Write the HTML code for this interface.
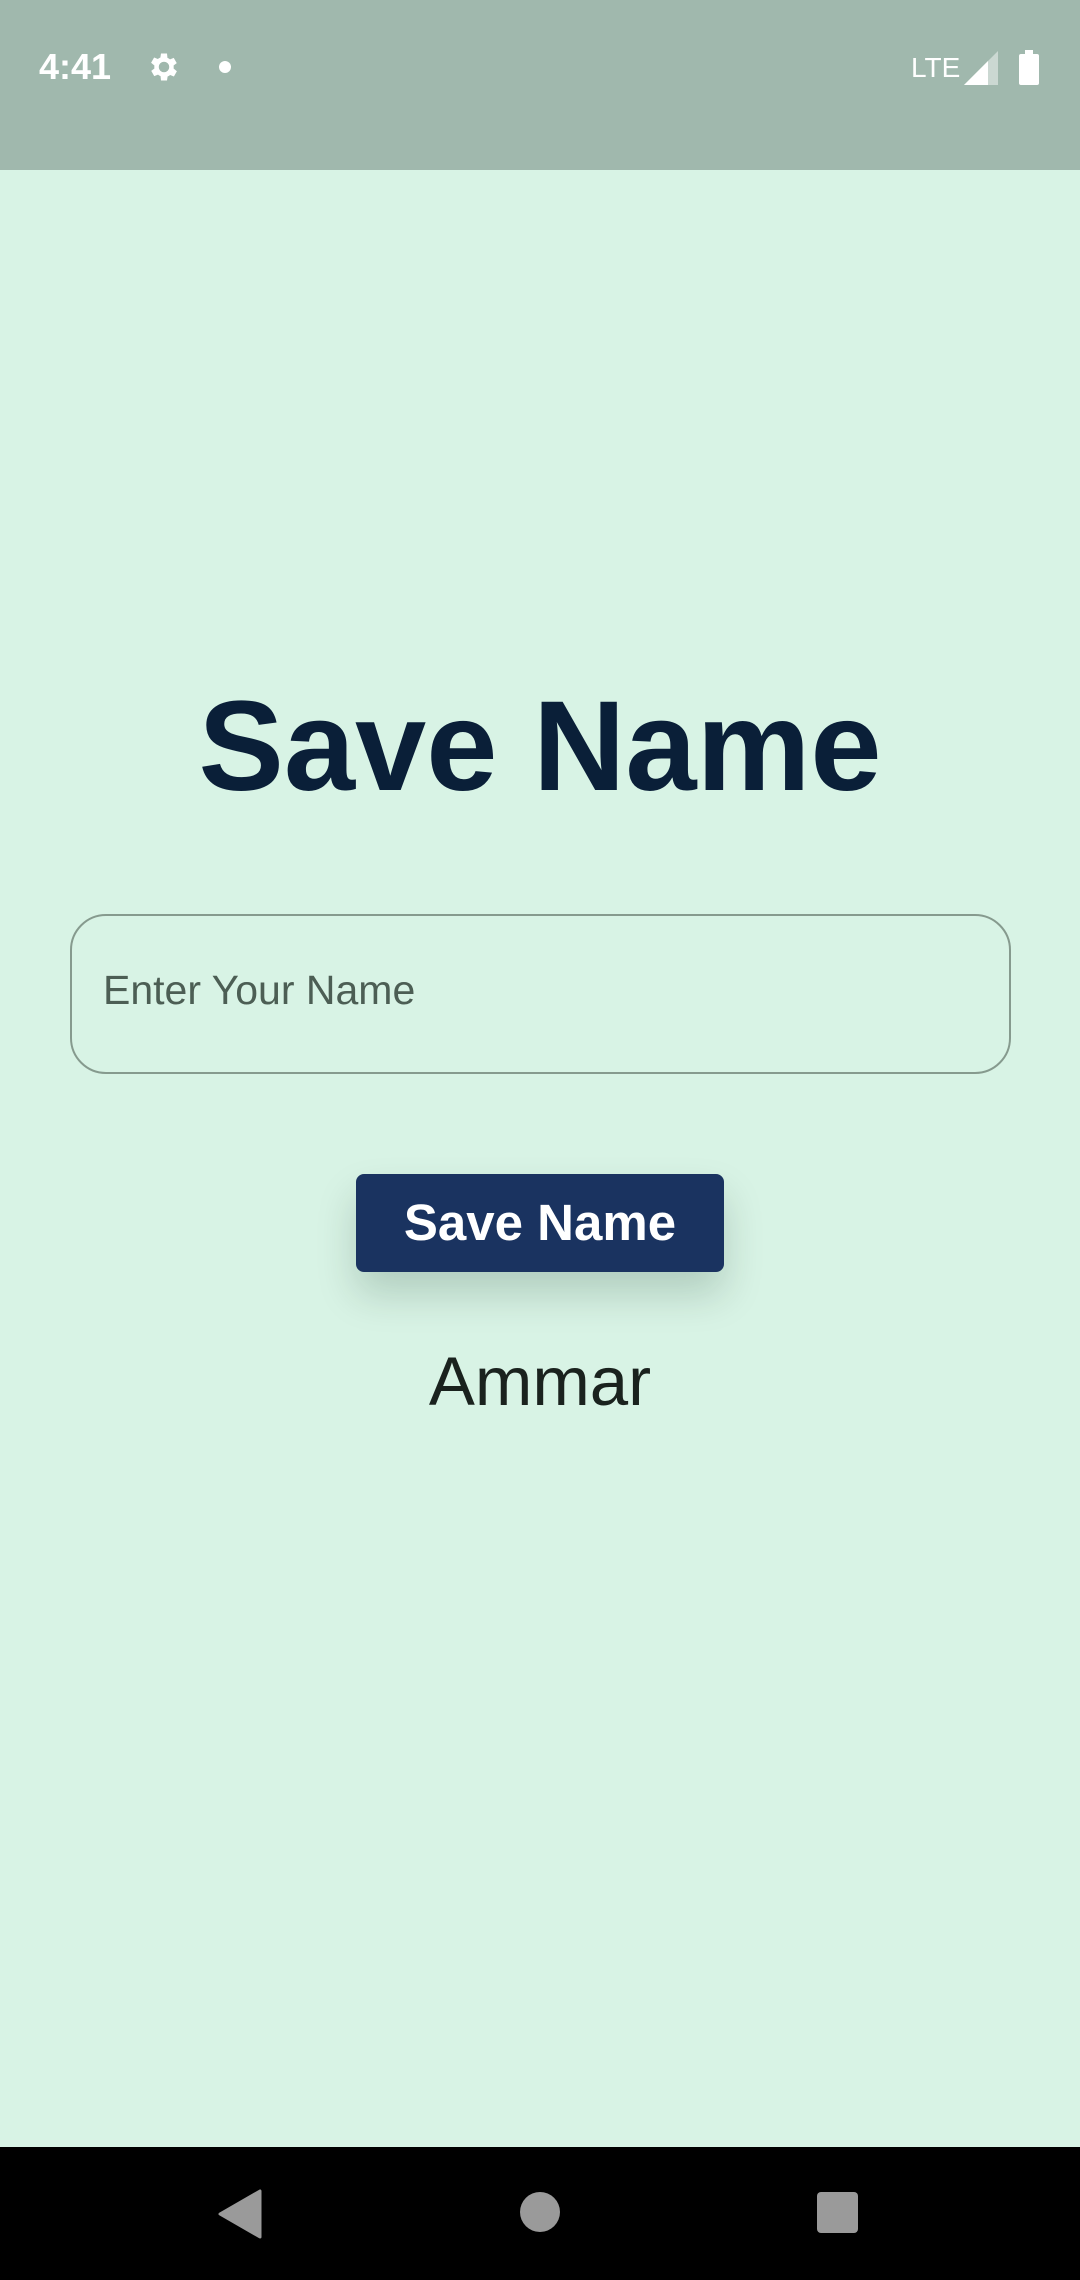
<!DOCTYPE html>
<html><head><meta charset="utf-8"><style>
html,body{margin:0;padding:0}
body{width:1080px;height:2280px;background:#d8f3e5;position:relative;overflow:hidden;font-family:"Liberation Sans",sans-serif}
.status{position:absolute;left:0;top:0;width:1080px;height:170px;background:#a0b8ad}
.t{position:absolute;color:#fff}
.title{position:absolute;top:662px;left:0;width:1080px;text-align:center;font-weight:bold;font-size:128px;color:#0a1f38;line-height:170px}
.input{position:absolute;left:70px;top:914px;width:941px;height:160px;border:2px solid #869a8e;border-radius:36px;box-sizing:border-box}
.ph{position:absolute;left:103px;top:962px;font-size:41px;color:#4c5e54;line-height:56px}
.btn{position:absolute;left:356px;top:1174px;width:368px;height:98px;background:#1a3360;border-radius:8px;color:#fff;font-weight:bold;font-size:51px;text-align:center;line-height:98px;box-shadow:0 22px 40px rgba(0,40,20,0.18)}
.name{position:absolute;left:0;width:1080px;top:1342px;text-align:center;font-size:69px;color:#1a221e;line-height:80px}
.nav{position:absolute;left:0;top:2147px;width:1080px;height:133px;background:#000}
</style></head><body>
<div class="status">
<div class="t" style="left:39px;top:47px;font-size:36px;line-height:40px;font-weight:bold">4:41</div>
<svg style="position:absolute;left:146px;top:49px" width="36" height="36" viewBox="0 0 24 24"><path fill="#fff" d="M19.4 13a7.5 7.5 0 0 0 0-2l2.1-1.6-2-3.5-2.5 1a7 7 0 0 0-1.7-1L15 3h-4l-.4 2.7a7 7 0 0 0-1.7 1l-2.5-1-2 3.5L6.6 11a7.5 7.5 0 0 0 0 2l-2.1 1.6 2 3.5 2.5-1a7 7 0 0 0 1.7 1L11 21h4l.4-2.7a7 7 0 0 0 1.7-1l2.5 1 2-3.5zM13 15.5a3.5 3.5 0 1 1 0-7 3.5 3.5 0 0 1 0 7z" transform="translate(-1 0)"/></svg>
<div style="position:absolute;left:219px;top:61px;width:12px;height:12px;border-radius:50%;background:#fff"></div>
<div class="t" style="left:911px;top:52px;font-size:28px;line-height:32px">LTE</div>
<svg style="position:absolute;left:964px;top:51px" width="34" height="34" viewBox="0 0 34 34"><path d="M34 0V34H0Z" fill="#fff" opacity=".45"/><path d="M24 10V34H0Z" fill="#fff"/></svg>
<div style="position:absolute;left:1019px;top:54px;width:20px;height:31px;background:#fff;border-radius:2px"></div>
<div style="position:absolute;left:1025px;top:50px;width:8px;height:5px;background:#fff"></div>
</div>
<div class="title">Save Name</div>
<div class="input"></div>
<div class="ph">Enter Your Name</div>
<div class="btn">Save Name</div>
<div class="name">Ammar</div>
<div class="nav">
<svg style="position:absolute;left:218px;top:42px" width="44" height="50" viewBox="0 0 44 50"><path d="M42 2V48L2 25Z" fill="#9a9a9a" stroke="#9a9a9a" stroke-width="3" stroke-linejoin="round"/></svg>
<div style="position:absolute;left:520px;top:45px;width:40px;height:40px;border-radius:50%;background:#9a9a9a"></div>
<div style="position:absolute;left:817px;top:45px;width:41px;height:41px;border-radius:4px;background:#9a9a9a"></div>
</div>
</body></html>
